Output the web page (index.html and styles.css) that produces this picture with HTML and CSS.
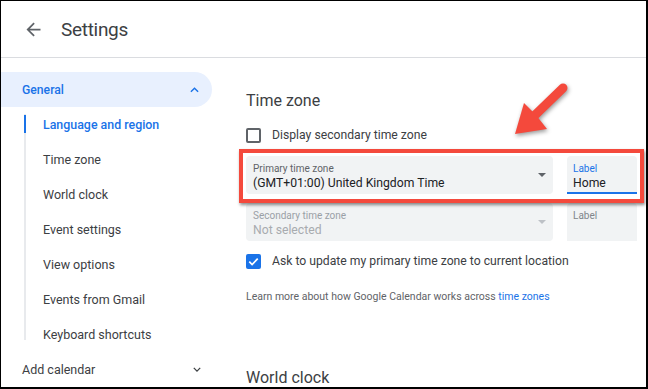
FILE: index.html
```html
<!DOCTYPE html>
<html>
<head>
<meta charset="utf-8">
<link rel="stylesheet" href="styles.css">
</head>
<body>
<div class="frame">
  <header class="topbar">
    <svg class="back" viewBox="0 0 24 24" width="21" height="21"><path d="M20 11H7.83l5.59-5.59L12 4l-8 8 8 8 1.41-1.41L7.83 13H20v-2z" fill="#5f6368"/></svg>
    <h1 class="title">Settings</h1>
  </header>
  <div class="body">
    <nav class="sidebar">
      <div class="nav-general">
        <span>General</span>
        <svg class="chev" viewBox="0 0 10 6" width="9" height="6"><path d="M1 5l4-4 4 4" fill="none" stroke="#1a73e8" stroke-width="1.6"/></svg>
      </div>
      <ul class="subnav">
        <li class="active">Language and region</li>
        <li>Time zone</li>
        <li>World clock</li>
        <li>Event settings</li>
        <li>View options</li>
        <li>Events from Gmail</li>
        <li>Keyboard shortcuts</li>
      </ul>
      <div class="nav-add">
        <span>Add calendar</span>
        <svg class="chev" viewBox="0 0 10 6" width="8" height="5"><path d="M1 1l4 4 4-4" fill="none" stroke="#3c4043" stroke-width="1.6"/></svg>
      </div>
    </nav>
    <main class="main">
      <h2 class="section-title">Time zone</h2>
      <label class="check-row first">
        <span class="box"></span>
        <span>Display secondary time zone</span>
      </label>
      <div class="field-row primary">
        <div class="select">
          <div class="f-label">Primary time zone</div>
          <div class="f-value">(GMT+01:00) United Kingdom Time</div>
          <span class="caret"></span>
        </div>
        <div class="labelbox focused">
          <div class="f-label">Label</div>
          <div class="f-value">Home</div>
        </div>
      </div>
      <div class="field-row disabled">
        <div class="select">
          <div class="f-label">Secondary time zone</div>
          <div class="f-value">Not selected</div>
          <span class="caret"></span>
        </div>
        <div class="labelbox">
          <div class="f-label">Label</div>
        </div>
      </div>
      <label class="check-row second">
        <span class="box checked"><svg viewBox="0 0 16 16" width="15" height="15"><path d="M3.5 8.2l3 3 6-6.2" fill="none" stroke="#fff" stroke-width="1.8"/></svg></span>
        <span>Ask to update my primary time zone to current location</span>
      </label>
      <p class="learn">Learn more about how Google Calendar works across <a href="#">time zones</a></p>
      <h2 class="section-title world">World clock</h2>
    </main>
  </div>
  <div class="highlight"></div>
  <svg class="pointer" viewBox="0 0 80 80" width="80" height="80">
    <line x1="63" y1="18" x2="32" y2="48" stroke="#f4493c" stroke-width="9" stroke-linecap="round"/>
    <polygon points="15,64 24,33 36,45 47,59" fill="#f4493c"/>
  </svg>
</div>
</body>
</html>
```
FILE: styles.css
```css
* { box-sizing: border-box; }
html, body { margin: 0; padding: 0; }
body { font-family: Roboto, "Liberation Sans", sans-serif; color: #3c4043; background: #fff; }

.frame {
  position: relative;
  width: 648px;
  height: 389px;
  border-style: solid;
  border-color: #000;
  border-width: 1px 2px 2px 1px;
  overflow: hidden;
  background: #fff;
}

.topbar {
  height: 57px;
  border-bottom: 1px solid #dadce0;
  display: flex;
  align-items: center;
  padding-left: 22px;
}
.back { display: block; margin-top: 1px; }
.title {
  margin: 0 0 0 17px;
  font-weight: 400;
  font-size: 19px;
  letter-spacing: -0.3px;
  color: #3c4043;
}

.body { display: flex; }

.sidebar { width: 211px; padding-top: 14px; flex: none; }
.nav-general {
  height: 35px;
  background: #e8f0fe;
  border-radius: 0 18px 18px 0;
  display: flex;
  align-items: center;
  justify-content: space-between;
  padding: 0 13px 0 21px;
  color: #1a73e8;
  font-size: 12.2px;
  font-weight: 500;
}
.chev { display: block; }

.subnav {
  list-style: none;
  margin: 0 0 0 23px;
  padding: 0;
  position: relative;
}
.subnav::before {
  content: "";
  position: absolute;
  left: 0;
  top: 7px;
  bottom: 12px;
  width: 2px;
  background: #e8eaed;
}
.subnav li {
  height: 35px;
  line-height: 35px;
  padding-left: 19px;
  font-size: 12.5px;
  color: #3c4043;
  position: relative;
}
.subnav li.active { color: #1a73e8; font-weight: 500; font-size: 12.4px; }
.subnav li.active::before {
  content: "";
  position: absolute;
  left: 0;
  top: 8px;
  height: 18px;
  width: 2px;
  background: #1a73e8;
}
.nav-add {
  height: 35px;
  display: flex;
  align-items: center;
  justify-content: space-between;
  padding: 0 11px 0 21px;
  font-size: 12.5px;
  color: #3c4043;
}

.main { flex: 1; padding-left: 34px; padding-top: 31px; }
.section-title {
  margin: 0;
  font-size: 16px;
  font-weight: 400;
  line-height: 24px;
  color: #3c4043;
}
.section-title.world { margin-top: 62px; }

.check-row {
  display: flex;
  align-items: center;
  gap: 11px;
  height: 20px;
  font-size: 12.2px;
  color: #3c4043;
}
.check-row.first { margin-top: 12px; }
.check-row.second { margin-top: 10px; }
.box {
  width: 15px;
  height: 15px;
  border: 2px solid #5f6368;
  border-radius: 2px;
  flex: none;
}
.box.checked {
  background: #1a73e8;
  border: none;
  display: flex;
  align-items: center;
  justify-content: center;
}
.box.checked svg { display: block; }

.field-row { display: flex; gap: 14px; margin-top: 11px; height: 38px; }
.field-row.disabled { margin-top: 9px; }
.select {
  width: 307px;
  background: #f1f3f4;
  border-radius: 4px;
  padding: 6px 7px 0;
  position: relative;
}
.labelbox {
  width: 70px;
  background: #f1f3f4;
  border-radius: 4px 4px 0 0;
  padding: 6px 6px 0;
}
.labelbox.focused { border-bottom: 2px solid #1a73e8; }
.f-label { font-size: 10px; line-height: 13px; color: #5f6368; }
.f-value { font-size: 12.2px; line-height: 16px; color: #202124; }
.focused .f-label { color: #1a73e8; }
.caret {
  position: absolute;
  right: 7px;
  top: 17px;
  width: 0;
  height: 0;
  border-left: 4px solid transparent;
  border-right: 4px solid transparent;
  border-top: 4px solid #5f6368;
}
.disabled .f-label { color: #9aa0a6; }
.disabled .f-value { color: #a8abaf; }
.disabled .caret { border-top-color: #bdc1c6; }
.disabled .labelbox .f-label { color: #80868b; }

.learn {
  margin: 19px 0 0;
  font-size: 10.5px;
  line-height: 14px;
  color: #5f6368;
}
.learn a { color: #1a73e8; text-decoration: none; }

.highlight {
  position: absolute;
  left: 238px;
  top: 148px;
  width: 405px;
  height: 54px;
  border: 4px solid #f4493c;
  box-shadow: 1px 2px 3px rgba(0,0,0,0.45);
}
.pointer {
  position: absolute;
  left: 499px;
  top: 69px;
  filter: drop-shadow(1px 2px 2px rgba(0,0,0,0.4));
}
```
